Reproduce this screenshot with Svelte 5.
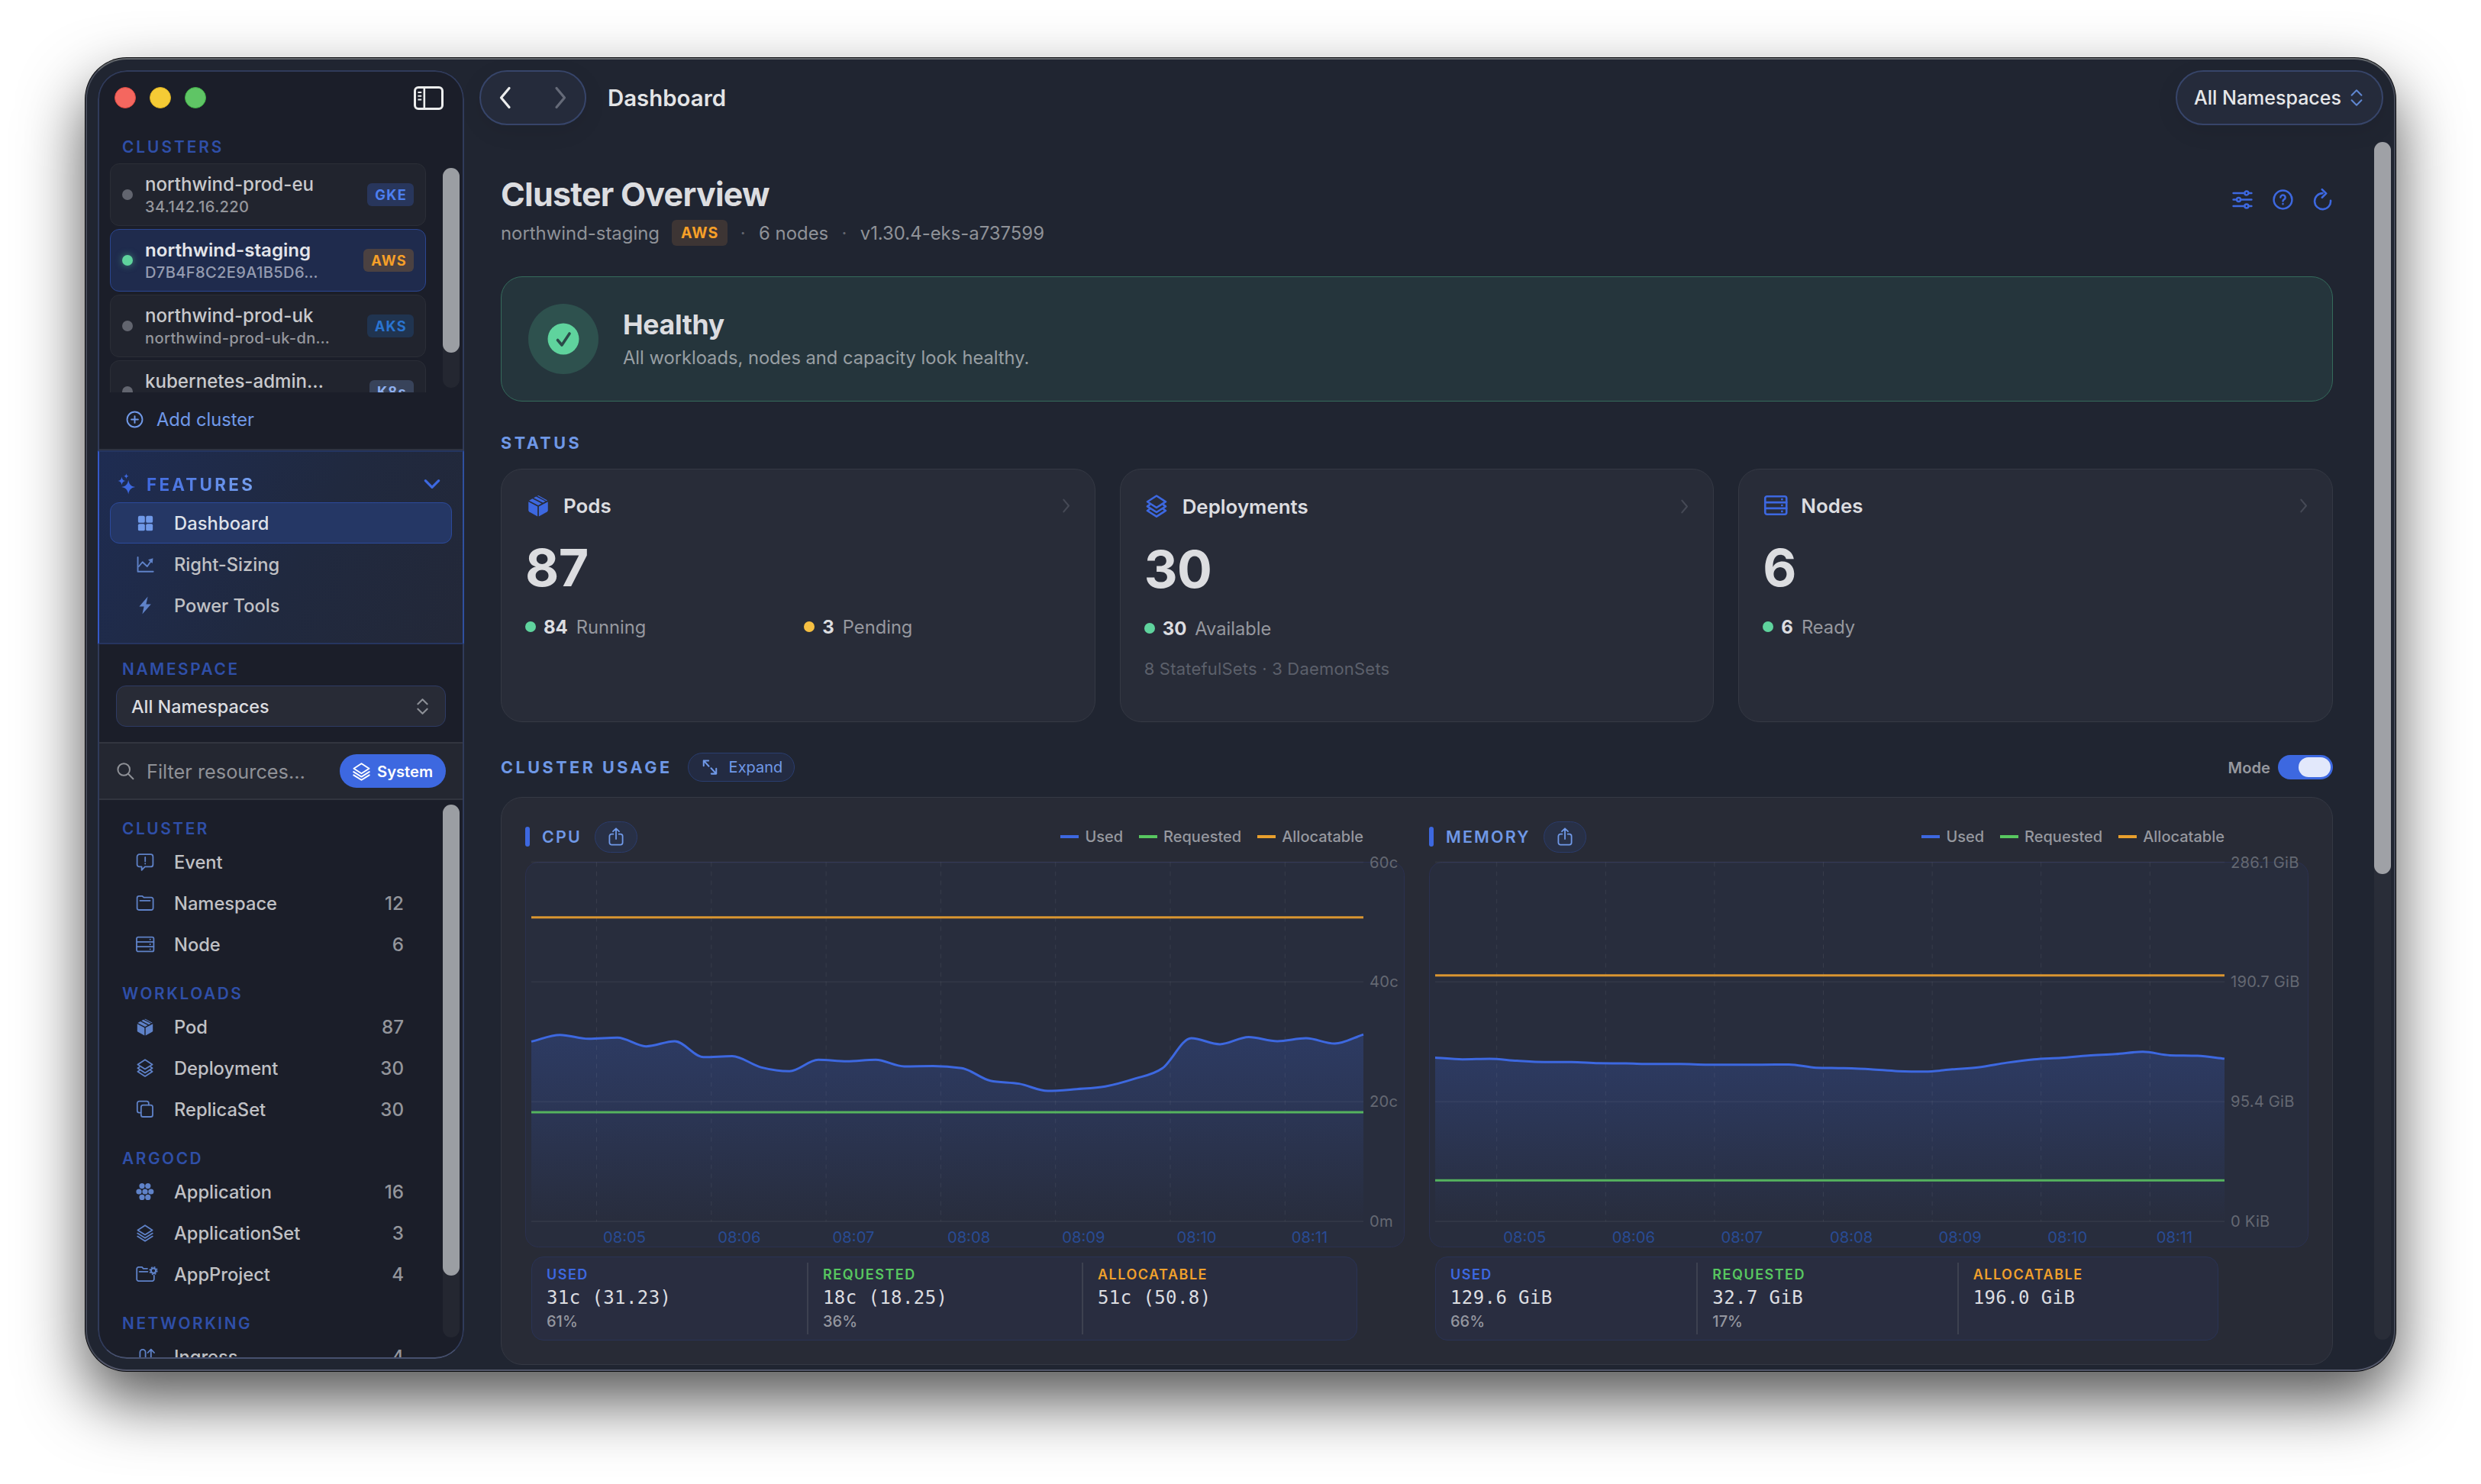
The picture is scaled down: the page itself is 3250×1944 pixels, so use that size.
<script>
    const icons = {
        layers: '<path d="M12 2.2 21.6 8.4 12 14.6 2.4 8.4Z"/><path d="M2.2 12.6 12 18.8l9.8-6.2M2.2 16.6 12 22.8l9.8-6.2"/>',
        stack: '<path d="M12 1.2 21.6 7.4 12 13.6 2.4 7.4Z"/><path d="M4.6 10.7 2.4 12.3 12 18.4l9.6-6.1-2.2-1.6M4.6 15.2 2.4 16.8 12 22.9l9.6-6.1-2.2-1.6"/>',
        event: '<path d="M4.6 2.2h14.8a3 3 0 0 1 3 3v10.2a3 3 0 0 1-3 3h-7.6L7.6 22.8v-4.4h-3a3 3 0 0 1-3-3V5.2a3 3 0 0 1 3-3Z"/><path d="M12.2 6v5.4M12.2 14.2v.4"/>',
        folder: '<path d="M1.6 18.6V5.2A2.4 2.4 0 0 1 4 2.8h4.2l2.2 1.8h9.8A2.4 2.4 0 0 1 22.6 7v11.6a2.4 2.4 0 0 1-2.4 2.4H4a2.4 2.4 0 0 1-2.4-2.4ZM5.4 8.8h13.2"/>',
        server: '<rect x="1" y="2.6" width="22.4" height="18.8" rx="2"/><path d="M1 8.9h22.4M1 15.1h22.4"/><path d="M18.6 5.7h.2M18.6 12h.2M18.6 18.3h.2"/>',
        copy: '<path d="M6.6 16.6H4.4A2.6 2.6 0 0 1 1.8 14V4.2a2.6 2.6 0 0 1 2.6-2.6h9.8a2.6 2.6 0 0 1 2.6 2.6v2.2"/><rect x="6.8" y="6.6" width="15.2" height="15.4" rx="2.6"/>',
        folderGear: '<path d="M15 4.8H9.8L8 2.9H3.6a2.4 2.4 0 0 0-2.4 2.4v13.4a2.4 2.4 0 0 0 2.4 2.4h17.8a2.4 2.4 0 0 0 2.4-2.4v-4.9M4.6 8.8h10.8"/><circle cx="23" cy="7.6" r="3.2" stroke-width="2.2"/><circle cx="23" cy="7.6" r="4.9" stroke-width="1.4" stroke-dasharray="2 1.85" stroke-linecap="butt"/>',
        ingress: '<path d="M5.4 14V6.4a3.6 3.6 0 0 1 7.2 0V18a3.6 3.6 0 0 0 7.2 0V3.4M15.6 7l4.2-4.4L24 7"/>',
        trend: '<path d="M1.6 2v19.6h21"/><path d="m3 14.6 5-6 6.4 6L20 6.8"/><path d="m15.6 5.4 6.8-2-.8 7Z" fill="currentColor" stroke="none"/>',
        chevron: '<path d="m4 8 8 8 8-8"/>',
        updown: '<path d="m5 8.4 7-7 7 7M5 15.6l7 7 7-7"/>',
        search: '<circle cx="10.2" cy="10" r="7.8"/><path d="m16 15.8 6.4 6.4"/>',
        plus: '<circle cx="12" cy="12" r="10.4"/><path d="M12 7.4v9.2M7.4 12h9.2"/>',
        expand: '<path d="M3 10V2.6h7M3 2.6l7.4 8M21 14v7.4h-7M21 21.4l-7.4-8"/>',
        share: '<path d="M8.4 8.6H6.2a2.8 2.8 0 0 0-2.8 2.8v8.4a2.8 2.8 0 0 0 2.8 2.8h11.6a2.8 2.8 0 0 0 2.8-2.8v-8.4a2.8 2.8 0 0 0-2.8-2.8h-2.2M12 15V1.6M8 5.2l4-3.9 4 3.9"/>',
        sliders: '<path d="M1.4 4.4h12.8M19.4 4.4h3.2M1.4 12H5M10.2 12h12.4M1.4 19.6h12.8M19.4 19.6h3.2"/><circle cx="16.8" cy="4.4" r="2.2"/><circle cx="7.6" cy="12" r="2.2"/><circle cx="16.8" cy="19.6" r="2.2"/>',
        help: '<circle cx="12" cy="12" r="10.6"/><path d="M9.2 9.4a2.8 2.7 0 1 1 4.3 2.3c-1 .6-1.5 1-1.5 2.1M12 16.8v.3"/>',
        refresh: '<path d="M11.6 4.4A9 9 0 1 0 20.6 12.6"/><path d="m11 .2 4.6 4.4L11 9.2"/>',
        left: '<path d="m16 2-8.4 10L16 22"/>',
        right: '<path d="m8 2 8.4 10L8 22"/>',
    };

    const solid = {
        cube: '<path d="M1.8 8.2 11.3 13.2V23.6L2.7 18.7a1.8 1.8 0 0 1-.9-1.5Z"/><path d="M22.2 8.2 12.7 13.2V23.6l8.6-4.9a1.8 1.8 0 0 0 .9-1.5Z"/><path d="m2.4 6.9 3.5-2 9.7 5-3.6 2Z"/><path d="m7.2 4.2 2.6-1.5 9.8 5-2.6 1.5Z"/><path d="M11 2l.2-.1a1.8 1.8 0 0 1 1.7 0l8.7 4.9-1 .5Z"/>',
        hive: '<circle cx="8" cy="4.6" r="3.6"/><circle cx="15.8" cy="4.6" r="3.6"/><circle cx="4" cy="12" r="3.6"/><circle cx="12" cy="12" r="3.6"/><circle cx="19.8" cy="12" r="3.6"/><circle cx="8" cy="19.4" r="3.6"/><circle cx="15.8" cy="19.4" r="3.6"/>',
        grid: '<rect x="1" y="0.8" width="10.2" height="10.4" rx="2.2"/><rect x="12.8" y="0.8" width="10.2" height="10.4" rx="2.2"/><rect x="1" y="12.8" width="10.2" height="10.4" rx="2.2"/><rect x="12.8" y="12.8" width="10.2" height="10.4" rx="2.2"/>',
        bolt: '<path d="M15.6.4 4.4 13.4h6.2L8.4 23.6 19.8 10.4h-6.4Z"/>',
        sparkles: '<path d="M14 7.2c1 5.200 2.900 7.600 8.400 8.600-5.500 1-7.400 3.400-8.400 8.600-1-5.200-2.900-7.600-8.400-8.600 5.500-1 7.400-3.400 8.400-8.600Z"/><path d="M6 3.200c.6 3.300 1.700 4.600 4.800 5.100C7.700 8.800 6.600 10.100 6 13.400 5.400 10.100 4.300 8.800 1.200 8.300 4.300 7.800 5.400 6.500 6 3.200Z"/><path d="M11.400-.8c.4 2.100 1.100 2.900 3.100 3.300-2 .4-2.700 1.200-3.100 3.300-.4-2.100-1.100-2.900-3.100-3.300 2-.4 2.700-1.200 3.100-3.300Z"/>',
    };

    const clusters = [
        { name: "northwind-prod-eu", host: "34.142.16.220", tag: "GKE" },
        { name: "northwind-staging", host: "D7B4F8C2E9A1B5D6…", tag: "AWS", active: true },
        { name: "northwind-prod-uk", host: "northwind-prod-uk-dn…", tag: "AKS" },
        { name: "kubernetes-admin…", host: "", tag: "K8s" },
    ];

    const features = [
        { name: "Dashboard", icon: "grid", size: 21, active: true },
        { name: "Right-Sizing", icon: "trend", size: 23 },
        { name: "Power Tools", icon: "bolt", size: 24 },
    ];

    const resources = [
        {
            title: "CLUSTER",
            items: [
                { name: "Event", icon: "event", count: "" },
                { name: "Namespace", icon: "folder", count: 12 },
                { name: "Node", icon: "server", count: 6 },
            ],
        },
        {
            title: "WORKLOADS",
            items: [
                { name: "Pod", icon: "cube", count: 87 },
                { name: "Deployment", icon: "stack", count: 30 },
                { name: "ReplicaSet", icon: "copy", count: 30 },
            ],
        },
        {
            title: "ARGOCD",
            items: [
                { name: "Application", icon: "hive", count: 16 },
                { name: "ApplicationSet", icon: "layers", count: 3 },
                { name: "AppProject", icon: "folderGear", count: 4 },
            ],
        },
        {
            title: "NETWORKING",
            items: [{ name: "Ingress", icon: "ingress", count: 4 }],
        },
    ];

    const cards = [
        {
            title: "Pods",
            icon: "cube",
            total: 87,
            states: [
                { n: 84, label: "Running", kind: "ok" },
                { n: 3, label: "Pending", kind: "warn" },
            ],
        },
        {
            title: "Deployments",
            icon: "stack",
            total: 30,
            states: [{ n: 30, label: "Available", kind: "ok" }],
            extra: "8 StatefulSets · 3 DaemonSets",
        },
        {
            title: "Nodes",
            icon: "server",
            total: 6,
            states: [{ n: 6, label: "Ready", kind: "ok" }],
        },
    ];

    const times = ["08:05", "08:06", "08:07", "08:08", "08:09", "08:10", "08:11"];

    const charts = [
        {
            title: "CPU",
            max: 60,
            right: 1098,
            tickStart: 93.5,
            tickStep: 150.3,
            labels: ["60c", "40c", "20c", "0m"],
            allocatable: 50.8,
            requested: 18.25,
            used: [
                30.05, 31.15, 30.5, 30.7, 29.25, 30.1, 27.45, 27.6, 25.75, 25.1,
                27.0, 26.75, 27.0, 25.9, 25.95, 25.6, 23.5, 23.0, 21.8, 22.1,
                22.55, 23.8, 25.6, 30.6, 29.6, 30.8, 30.1, 30.6, 29.7, 31.23,
            ],
            stats: [
                { label: "USED", value: "31c (31.23)", pct: "61%" },
                { label: "REQUESTED", value: "18c (18.25)", pct: "36%" },
                { label: "ALLOCATABLE", value: "51c (50.8)", pct: "" },
            ],
        },
        {
            title: "MEMORY",
            max: 286.1,
            right: 1042,
            tickStart: 88.7,
            tickStep: 142.6,
            labels: ["286.1 GiB", "190.7 GiB", "95.4 GiB", "0 KiB"],
            allocatable: 196,
            requested: 32.7,
            used: [
                130.5, 129.1, 129.5, 128.0, 127.0, 127.0, 126.0, 125.8, 125.4, 125.4,
                124.8, 124.8, 124.8, 125.0, 122.4, 122.0, 121.2, 119.7, 119.3, 121.1,
                122.8, 126.4, 129.1, 130.3, 132.1, 133.3, 135.1, 132.3, 131.9, 129.6,
            ],
            stats: [
                { label: "USED", value: "129.6 GiB", pct: "66%" },
                { label: "REQUESTED", value: "32.7 GiB", pct: "17%" },
                { label: "ALLOCATABLE", value: "196.0 GiB", pct: "" },
            ],
        },
    ];

    const LEFT = 8;
    const TOP = 1.5;
    const BOTTOM = 472;

    function yOf(value, max) {
        return BOTTOM - (value / max) * (BOTTOM - TOP);
    }

    // monotone cubic, so the curve never overshoots a sample
    function linePath(chart) {
        const step = (chart.right - LEFT) / (chart.used.length - 1);
        const ys = chart.used.map((v) => yOf(v, chart.max));
        const slopes = ys.slice(1).map((y, i) => (y - ys[i]) / step);
        const tangents = ys.map((_, i) => {
            if (i === 0) return slopes[0];
            if (i === ys.length - 1) return slopes[i - 1];
            const a = slopes[i - 1];
            const b = slopes[i];
            if (a * b <= 0) return 0;
            return Math.sign(a) * Math.min(Math.abs(a), Math.abs(b), Math.abs(a + b) / 4) * 2;
        });
        let d = `M${LEFT} ${ys[0].toFixed(2)}`;
        for (let i = 1; i < ys.length; i++) {
            const x0 = LEFT + step * (i - 1);
            const x1 = LEFT + step * i;
            const c0 = ys[i - 1] + (tangents[i - 1] * step) / 3;
            const c1 = ys[i] - (tangents[i] * step) / 3;
            d += `C${(x0 + step / 3).toFixed(2)} ${c0.toFixed(2)} ${(x1 - step / 3).toFixed(2)} ${c1.toFixed(2)} ${x1.toFixed(2)} ${ys[i].toFixed(2)}`;
        }
        return d;
    }
</script>

{#snippet icon(name, size, weight = 1.8)}
    {#if solid[name]}
        <svg class="icon" width={size} height={size} viewBox="0 0 24 24" fill="currentColor">{@html solid[name]}</svg>
    {:else}
        <svg
            class="icon"
            width={size}
            height={size}
            viewBox="0 0 24 24"
            fill="none"
            stroke="currentColor"
            stroke-width={weight}
            stroke-linecap="round"
            stroke-linejoin="round">{@html icons[name]}</svg
        >
    {/if}
{/snippet}

<div class="desktop">
    <div class="window">
        <aside class="sidebar">
            <div class="titlebar">
                <span class="light red"></span>
                <span class="light yellow"></span>
                <span class="light green"></span>
                <svg class="panel-toggle" width="39" height="31" viewBox="0 0 39 31" fill="none" stroke="currentColor">
                    <rect x="1.5" y="1.5" width="36" height="28" rx="4.5" stroke-width="3" />
                    <path d="M13.8 2v27" stroke-width="2.6" />
                    <path d="M5.4 8h4.8M5.4 12.8h4.8M5.4 17.6h4.8" stroke-width="2" />
                </svg>
            </div>

            <div class="label clusters-label">CLUSTERS</div>
            <div class="cluster-area">
                <div class="cluster-list">
                    {#each clusters as c}
                        <div class="cluster" class:active={c.active}>
                            <span class="dot"></span>
                            <div class="cluster-text">
                                <div class="cluster-name">{c.name}</div>
                                <div class="cluster-host">{c.host}</div>
                            </div>
                            <span class="tag {c.tag.toLowerCase()}">{c.tag}</span>
                        </div>
                    {/each}
                </div>
                <div class="scrollbar"><div class="thumb clusters-thumb"></div></div>
            </div>
            <div class="add-cluster">
                {@render icon("plus", 23, 2)}
                <span>Add cluster</span>
            </div>

            <div class="features">
                <div class="features-head">
                    {@render icon("sparkles", 26)}
                    <span class="features-title">FEATURES</span>
                    {@render icon("chevron", 26, 3)}
                </div>
                {#each features as f}
                    <div class="item feature" class:active={f.active}>
                        <span class="item-icon">{@render icon(f.icon, f.size, 2)}</span>
                        <span>{f.name}</span>
                    </div>
                {/each}
            </div>

            <div class="namespace">
                <div class="label">NAMESPACE</div>
                <div class="select">
                    <span>All Namespaces</span>
                    {@render icon("updown", 21, 2.4)}
                </div>
            </div>

            <div class="filter">
                {@render icon("search", 24, 2)}
                <span class="placeholder">Filter resources…</span>
                <span class="system">{@render icon("layers", 25, 1.9)} System</span>
            </div>

            <div class="resource-area">
                <div class="resource-list">
                    {#each resources as group}
                        <div class="label group-label">{group.title}</div>
                        {#each group.items as item}
                            <div class="item">
                                <span class="item-icon">{@render icon(item.icon, 24, 1.8)}</span>
                                <span>{item.name}</span>
                                <span class="count">{item.count}</span>
                            </div>
                        {/each}
                    {/each}
                </div>
                <div class="scrollbar"><div class="thumb resources-thumb"></div></div>
            </div>
        </aside>

        <main class="main">
            <div class="toolbar">
                <div class="pill nav">
                    {@render icon("left", 30, 2.6)}
                    <span class="dim">{@render icon("right", 30, 2.6)}</span>
                </div>
                <div class="toolbar-title">Dashboard</div>
                <div class="pill ns">
                    <span>All Namespaces</span>
                    {@render icon("updown", 22, 2.2)}
                </div>
            </div>

            <div class="body">
                <div class="page">
                    <div class="page-head">
                        <div>
                            <h1>Cluster Overview</h1>
                            <div class="meta">
                                <span>northwind-staging</span>
                                <span class="tag aws big">AWS</span>
                                <span class="sep">·</span>
                                <span>6 nodes</span>
                                <span class="sep">·</span>
                                <span>v1.30.4-eks-a737599</span>
                            </div>
                        </div>
                        <div class="actions">
                            {@render icon("sliders", 27, 2.2)}
                            {@render icon("help", 27, 2.2)}
                            {@render icon("refresh", 28, 2.2)}
                        </div>
                    </div>

                    <div class="health">
                        <div class="health-icon">
                            <svg width="42" height="42" viewBox="0 0 42 42">
                                <circle cx="21" cy="21" r="20.5" fill="#5fd39d" />
                                <path
                                    d="m13.5 22.5 5.5 6.5L29 14"
                                    fill="none"
                                    stroke="#2b4a49"
                                    stroke-width="3.6"
                                    stroke-linecap="round"
                                    stroke-linejoin="round"
                                />
                            </svg>
                        </div>
                        <div class="health-body">
                            <div class="health-title">Healthy</div>
                            <div class="health-text">All workloads, nodes and capacity look healthy.</div>
                        </div>
                    </div>

                    <div class="section-title status-title">STATUS</div>
                    <div class="cards">
                        {#each cards as card}
                            <div class="card">
                                <div class="card-head" class:tall={card.extra}>
                                    <span class="card-icon">{@render icon(card.icon, 30, 2.1)}</span>
                                    <span class="card-title">{card.title}</span>
                                    <span class="card-arrow">{@render icon("right", 19, 2.6)}</span>
                                </div>
                                <div class="total">{card.total}</div>
                                <div class="states">
                                    {#each card.states as s}
                                        <div class="state">
                                            <span class="dot {s.kind}"></span>
                                            <b>{s.n}</b>
                                            <span>{s.label}</span>
                                        </div>
                                    {/each}
                                </div>
                                {#if card.extra}
                                    <div class="extra">{card.extra}</div>
                                {/if}
                            </div>
                        {/each}
                    </div>

                    <div class="usage-head">
                        <span class="section-title">CLUSTER USAGE</span>
                        <span class="expand">{@render icon("expand", 22, 2.2)} Expand</span>
                        <span class="mode">Mode</span>
                        <span class="toggle"><span class="knob"></span></span>
                    </div>

                    <div class="usage">
                        {#each charts as chart}
                            <div class="chart">
                                <div class="chart-head" style="padding-right: {1152 - chart.right}px">
                                    <span class="bar"></span>
                                    <span class="chart-title">{chart.title}</span>
                                    <span class="share">{@render icon("share", 24, 1.8)}</span>
                                    <div class="legend">
                                        <span class="key used">Used</span>
                                        <span class="key requested">Requested</span>
                                        <span class="key allocatable">Allocatable</span>
                                    </div>
                                </div>
                                <svg class="plot" width="1152" height="506" viewBox="0 0 1152 506">
                                    <defs>
                                        <linearGradient id="fill-{chart.title}" x1="0" y1="0" x2="0" y2="1">
                                            <stop offset="0" stop-color="#3d68e0" stop-opacity="0.23" />
                                            <stop offset="0.4" stop-color="#3d68e0" stop-opacity="0.15" />
                                            <stop offset="1" stop-color="#3d68e0" stop-opacity="0" />
                                        </linearGradient>
                                    </defs>
                                    <rect class="plot-bg" x="0.5" y="1.5" width="1151" height="504" rx="17" />
                                    <path
                                        d="{linePath(chart)}V{BOTTOM}H{LEFT}Z"
                                        fill="url(#fill-{chart.title})"
                                    />
                                    {#each chart.labels as label, i}
                                        {@const y = TOP + ((BOTTOM - TOP) / 3) * i}
                                        <line class="grid" x1={LEFT} x2={chart.right} y1={y} y2={y} />
                                        <text class="y-label" x={chart.right + 8} y={y + 7}>{label}</text>
                                    {/each}
                                    {#each times as time, i}
                                        {@const x = chart.tickStart + chart.tickStep * i}
                                        <line class="tick" x1={x} x2={x} y1={TOP} y2={BOTTOM} />
                                        <text class="x-label" x={x + 8.5} y="500">{time}</text>
                                    {/each}
                                    <line
                                        class="limit orange"
                                        x1={LEFT}
                                        x2={chart.right}
                                        y1={yOf(chart.allocatable, chart.max)}
                                        y2={yOf(chart.allocatable, chart.max)}
                                    />
                                    <path class="used-line" d={linePath(chart)} />
                                    <line
                                        class="limit lime"
                                        x1={LEFT}
                                        x2={chart.right}
                                        y1={yOf(chart.requested, chart.max)}
                                        y2={yOf(chart.requested, chart.max)}
                                    />
                                </svg>
                                <div class="stats" style="width: {chart.right - 16}px">
                                    {#each chart.stats as s}
                                        <div class="stat">
                                            <div class="stat-label {s.label.toLowerCase()}">{s.label}</div>
                                            <div class="stat-value">{s.value}</div>
                                            <div class="stat-pct">{s.pct}</div>
                                        </div>
                                    {/each}
                                </div>
                            </div>
                        {/each}
                    </div>
                </div>
                <div class="scrollbar main-scroll"><div class="thumb main-thumb"></div></div>
            </div>
        </main>
    </div>
</div>

<style>
    :global(body) {
        background: #fff;
    }

    .desktop,
    .desktop * {
        box-sizing: border-box;
    }

    .desktop {
        width: 3250px;
        height: 1944px;
        padding: 76px 112px;
        overflow: hidden;
        font-family: Inter, "Liberation Sans", sans-serif;
        font-size: 23.4px;
        color: #dcdde0;
        white-space: nowrap;
    }

    .window {
        display: flex;
        width: 3026px;
        height: 1720px;
        border: 2px solid;
        border-color: #62666b #444957 #53576a #444957;
        border-radius: 54px;
        background: #202531;
        overflow: hidden;
        box-shadow:
            0 0 0 1px #08090c,
            0 38px 84px rgba(0, 0, 0, 0.68);
    }

    .icon {
        display: block;
        flex: none;
        overflow: visible;
    }

    /* sidebar */

    .sidebar {
        position: relative;
        display: flex;
        flex-direction: column;
        flex: none;
        width: 480px;
        height: 1688px;
        margin: 14px 0 14px 14px;
        border-radius: 38px;
        background: #1b1e29;
        overflow: hidden;
    }

    .sidebar::after {
        content: "";
        position: absolute;
        inset: 0;
        border: 2px solid #303b5a;
        border-bottom-color: #46506e;
        border-radius: 38px;
        pointer-events: none;
    }

    .titlebar {
        display: flex;
        align-items: center;
        flex: none;
        gap: 18px;
        height: 72px;
        padding: 0 27px 0 22px;
    }

    .light {
        width: 28px;
        height: 28px;
        border-radius: 50%;
    }

    .red {
        background: #f4675f;
        border: 1px solid #dc4a42;
    }

    .yellow {
        background: #f5cb35;
        border: 1px solid #dbb021;
    }

    .green {
        background: #5fc565;
        border: 1px solid #3fae46;
    }

    .panel-toggle {
        margin-left: auto;
        color: #eceded;
    }

    .label {
        font-size: 20.8px;
        font-weight: 600;
        line-height: 28px;
        letter-spacing: 2.6px;
        color: #2f4fa8;
        padding-left: 32px;
    }

    .clusters-label {
        flex: none;
        padding-top: 15px;
        padding-bottom: 7px;
        letter-spacing: 3px;
    }

    .cluster-area {
        display: flex;
        flex: none;
        justify-content: space-between;
        height: 300px;
        padding: 0 6px 0 16px;
        overflow: hidden;
    }

    .cluster-list {
        display: flex;
        flex-direction: column;
        gap: 4px;
        width: 414px;
    }

    .cluster {
        display: flex;
        align-items: center;
        flex: none;
        height: 82px;
        padding: 0 15px;
        border: 1px solid #2b2e37;
        border-radius: 12px;
        background: #21242e;
    }

    .cluster.active {
        background: #1f2b4d;
        border-color: #2b4690;
    }

    .dot {
        flex: none;
        width: 14px;
        height: 14px;
        border-radius: 50%;
        background: #62656f;
    }

    .cluster.active .dot {
        background: #5fd39d;
        box-shadow: 0 0 10px rgba(95, 211, 157, 0.55);
    }

    .cluster-text {
        flex: 1;
        padding: 2px 0 0 16px;
    }

    .cluster-name {
        font-size: 24.1px;
        font-weight: 500;
        line-height: 30px;
        color: #c8c9cc;
    }

    .active .cluster-name {
        font-weight: 600;
        color: #e3e5ea;
    }

    .cluster-host {
        height: 28px;
        font-size: 20.1px;
        font-weight: 500;
        line-height: 28px;
        letter-spacing: 0.35px;
        color: #94969c;
    }

    .active .cluster-host {
        color: #949bb0;
    }

    .tag {
        height: 30px;
        padding: 0 9px 0 10px;
        border-radius: 6px;
        font-size: 18.2px;
        font-weight: 700;
        line-height: 31px;
        letter-spacing: 1.3px;
    }

    .gke {
        color: #4d7ff0;
        background: #28365c;
    }

    .aws {
        color: #f7a028;
        background: #4b4141;
    }

    .aks {
        color: #2a74d0;
        background: #203450;
    }

    .k8s {
        color: #8fb0ee;
        background: #38435a;
    }

    .scrollbar {
        flex: none;
        width: 22px;
        margin: 6px 0;
        border-radius: 11px;
        background: #242731;
    }

    .thumb {
        border-radius: 11px;
        background: #9b9ea3;
    }

    .clusters-thumb {
        height: 242px;
    }

    .resources-thumb {
        height: 617px;
    }

    .add-cluster {
        display: flex;
        align-items: center;
        flex: none;
        gap: 17px;
        height: 76px;
        padding: 0 0 4px 37px;
        border-bottom: 2px solid #2e3340;
        font-size: 23.7px;
        color: #7099e8;
    }

    .features {
        position: relative;
        z-index: 1;
        flex: none;
        height: 254px;
        padding: 18px 14px 0;
        border: 2px solid;
        border-color: #243560 #2f509f #263560 #3559c8;
        background: linear-gradient(120deg, #1e2c52, #20293f 55%, #232838);
    }

    .features-head {
        display: flex;
        align-items: center;
        height: 48px;
        padding: 0 13px 0 9px;
        color: #3d68e0;
    }

    .features-title {
        flex: 1;
        margin-left: 13px;
        font-size: 22.4px;
        font-weight: 700;
        letter-spacing: 3.3px;
        background: linear-gradient(90deg, #3f69e0, #76a0ee 140px);
        background-clip: text;
        color: transparent;
    }

    .item {
        display: flex;
        align-items: center;
        height: 54px;
        font-size: 23.7px;
        font-weight: 500;
        color: #c0c1c5;
    }

    .item-icon {
        display: flex;
        justify-content: center;
        width: 28px;
        margin-right: 24px;
        color: #5f82c8;
    }

    .feature {
        padding-left: 31px;
        border: 1px solid transparent;
        border-radius: 12px;
    }

    .feature.active {
        background: #253765;
        border-color: #2c4a9c;
        color: #dfe2ea;
        letter-spacing: 0.1px;
    }

    .feature.active .item-icon {
        color: #7099e8;
    }

    .namespace {
        flex: none;
        height: 128px;
        padding-top: 19px;
    }

    .select {
        display: flex;
        align-items: center;
        justify-content: space-between;
        height: 54px;
        margin: 7px 24px 0;
        padding: 0 19px;
        border: 1px solid #2e3b64;
        border-radius: 13px;
        background: #282b36;
        font-weight: 500;
        color: #dcdde0;
    }

    .select .icon {
        color: #8d9097;
    }

    .filter {
        display: flex;
        align-items: center;
        flex: none;
        height: 76px;
        padding: 0 24px;
        border-top: 2px solid #32353f;
        border-bottom: 2px solid #32353f;
        background: #242731;
        color: #8f9197;
    }

    .placeholder {
        flex: 1;
        margin-left: 16px;
        font-size: 25.3px;
    }

    .system {
        display: flex;
        align-items: center;
        gap: 8px;
        width: 139px;
        height: 44px;
        padding-left: 16px;
        border-radius: 22px;
        background: #3d68e0;
        font-size: 20.2px;
        font-weight: 600;
        color: #fff;
    }

    .resource-area {
        display: flex;
        justify-content: space-between;
        flex: 1;
        min-height: 0;
        padding-right: 6px;
    }

    .resource-list {
        width: 401px;
        height: 100%;
        overflow: hidden;
    }

    .resource-area .scrollbar {
        margin-bottom: 28px;
    }

    .group-label {
        height: 54px;
        padding-top: 24px;
    }

    .resource-list .item {
        padding-left: 48px;
    }

    .count {
        margin-left: auto;
        font-size: 24.2px;
        color: #94969c;
    }

    /* main */

    .main {
        display: flex;
        flex-direction: column;
        flex: 1;
        min-width: 0;
    }

    .toolbar {
        display: flex;
        align-items: center;
        flex: none;
        height: 86px;
        padding: 14px 14px 0 20px;
    }

    .pill {
        display: flex;
        align-items: center;
        height: 72px;
        border: 2px solid #37456a;
        border-radius: 36px;
        background: #252b3b;
        box-shadow: 0 8px 30px rgba(0, 0, 0, 0.08);
    }

    .nav {
        justify-content: space-between;
        width: 140px;
        padding: 0 17px;
        color: #eceded;
    }

    .dim {
        color: #656a78;
    }

    .toolbar-title {
        margin-left: 28px;
        font-size: 29.4px;
        font-weight: 600;
        color: #e3e4e6;
    }

    .ns {
        justify-content: space-between;
        width: 272px;
        margin-left: auto;
        padding: 0 22px;
        font-size: 25px;
        font-weight: 500;
        color: #e6e7e9;
    }

    .ns .icon {
        color: #5f86d0;
    }

    .body {
        display: flex;
        flex: 1;
        min-height: 0;
    }

    .page {
        flex: 1;
        padding: 64px 54px 0 48px;
    }

    .main-scroll {
        height: 1569px;
        margin: 22px 4px 0 0;
        background: #292d38;
    }

    .main-thumb {
        height: 959px;
        background: #9fa1a6;
    }

    .page-head {
        display: flex;
        justify-content: space-between;
        height: 94px;
    }

    h1 {
        margin: 0 0 8px;
        font-size: 43px;
        font-weight: 700;
        line-height: 52px;
        letter-spacing: -0.75px;
    }

    .meta {
        display: flex;
        align-items: center;
        height: 34px;
        font-size: 23.9px;
        color: #8f9298;
    }

    .big {
        height: 34px;
        margin: 0 0 0 16px;
        padding: 0 11px 0 12px;
        font-size: 19.6px;
        line-height: 35px;
        letter-spacing: 1.1px;
        background: #3d3534;
    }

    .sep {
        width: 41.5px;
        text-align: center;
        color: #63666f;
    }

    .actions {
        display: flex;
        gap: 25.5px;
        margin-right: -1px;
        padding-top: 20px;
        color: #3d68e0;
    }

    .health {
        display: flex;
        align-items: center;
        gap: 32px;
        height: 164px;
        margin-top: 40px;
        padding-left: 35px;
        border: 1px solid #356b5c;
        border-radius: 28px;
        background: #25353c;
    }

    .health-icon {
        display: flex;
        align-items: center;
        justify-content: center;
        width: 92px;
        height: 92px;
        border-radius: 50%;
        background: #2e514e;
    }

    .health-body {
        padding-top: 5px;
    }

    .health-title {
        font-size: 35.6px;
        font-weight: 700;
        line-height: 44px;
        letter-spacing: -0.3px;
    }

    .health-text {
        font-size: 23.7px;
        line-height: 41px;
        color: #989fa3;
    }

    .section-title {
        font-size: 21.6px;
        font-weight: 700;
        line-height: 28px;
        letter-spacing: 3.5px;
        color: #6f98e6;
    }

    .status-title {
        margin: 40px 0 20px;
    }

    .cards {
        display: grid;
        grid-template-columns: repeat(3, 1fr);
        gap: 32px;
    }

    .card {
        height: 332px;
        padding: 31px;
        border: 1px solid #353944;
        border-radius: 28px;
        background: #282c38;
    }

    .card-head {
        display: flex;
        align-items: center;
        height: 32px;
    }

    .card-head.tall {
        height: 34px;
    }

    .card-icon {
        display: flex;
        justify-content: center;
        width: 33px;
        margin-right: 17px;
        color: #3d68e0;
    }

    .card-title {
        font-size: 25.9px;
        font-weight: 600;
        color: #dcdde0;
    }

    .card-arrow {
        margin: 0 -3px 0 auto;
        color: #454955;
    }

    .total {
        margin: 25px 0 23px;
        font-size: 68px;
        font-weight: 700;
        line-height: 80px;
        letter-spacing: -0.6px;
        color: #dcdde0;
    }

    .states {
        display: grid;
        grid-template-columns: 1fr 1fr;
        gap: 16px;
    }

    .state {
        display: flex;
        align-items: center;
        height: 30px;
        font-size: 23.7px;
        color: #96989f;
    }

    .state b {
        margin: 0 11px 0 10px;
        font-size: 24px;
        font-weight: 700;
        color: #dcdde0;
    }

    .ok {
        background: #5fd39d;
    }

    .warn {
        background: #f5bf42;
    }

    .extra {
        margin-top: 24px;
        font-size: 22px;
        line-height: 28px;
        letter-spacing: 0.2px;
        color: #5c606b;
    }

    .usage-head {
        display: flex;
        align-items: center;
        height: 38px;
        margin: 40px 0 20px;
    }

    .expand {
        display: flex;
        align-items: center;
        gap: 14px;
        width: 140px;
        height: 38px;
        margin-left: 20px;
        padding-left: 17px;
        border: 1px solid #2a3e70;
        border-radius: 19px;
        background: #232b42;
        font-size: 20px;
        color: #7099e8;
    }

    .mode {
        margin-left: auto;
        font-size: 20.2px;
        font-weight: 600;
        color: #96989f;
    }

    .toggle {
        display: flex;
        justify-content: flex-end;
        width: 72px;
        height: 32px;
        margin-left: 10px;
        padding: 3px;
        border-radius: 16px;
        background: #3d68e0;
    }

    .knob {
        width: 42px;
        height: 26px;
        border-radius: 13px;
        background: #e2e8fb;
    }

    .usage {
        display: flex;
        gap: 32px;
        height: 744px;
        padding: 31px;
        border: 1px solid #353944;
        border-radius: 28px;
        background: #282b36;
    }

    .chart {
        width: 1152px;
    }

    .chart-head {
        display: flex;
        align-items: center;
        height: 40px;
        margin-bottom: 12px;
    }

    .bar {
        width: 6px;
        height: 26px;
        border-radius: 3px;
        background: #3d68e0;
    }

    .chart-title {
        margin: 0 17px 0 16px;
        font-size: 21.4px;
        font-weight: 600;
        letter-spacing: 2.2px;
        color: #6f98e6;
    }

    .share {
        display: flex;
        align-items: center;
        justify-content: center;
        width: 56px;
        height: 41px;
        border: 1px solid #2b3c6c;
        border-radius: 21px;
        background: #283046;
        color: #7099e8;
    }

    .legend {
        display: flex;
        gap: 21px;
        margin-left: auto;
        font-size: 20px;
        font-weight: 500;
        color: #96989f;
    }

    .key {
        display: flex;
        align-items: center;
        gap: 8px;
    }

    .key::before {
        content: "";
        width: 24px;
        height: 4px;
        background: currentColor;
    }

    .key.used::before {
        background: #3d68e0;
    }

    .key.requested::before {
        background: #58c760;
    }

    .key.allocatable::before {
        background: #e89f2d;
    }

    .plot {
        display: block;
        overflow: visible;
        font-size: 20.2px;
    }

    .plot-bg {
        fill: #282d3d;
        stroke: #2b3150;
        stroke-width: 1;
    }

    .grid {
        stroke: rgba(255, 255, 255, 0.045);
        stroke-width: 2;
    }

    .tick {
        stroke: rgba(255, 255, 255, 0.075);
        stroke-width: 1;
        stroke-dasharray: 6 6;
    }

    .y-label {
        fill: #646872;
        letter-spacing: 0.2px;
    }

    .x-label {
        fill: #294b93;
    }

    .used-line {
        fill: none;
        stroke: #3d68e0;
        stroke-width: 3;
    }

    .limit {
        stroke-width: 3;
    }

    .orange {
        stroke: #d99531;
    }

    .lime {
        stroke: #55b35e;
    }

    .stats {
        display: grid;
        grid-template-columns: repeat(3, 1fr);
        height: 110px;
        margin: 12px 0 0 8px;
        padding: 7px 0;
        border: 1px solid #2a3355;
        border-radius: 16px;
        background: #292d40;
    }

    .stat {
        padding: 6px 0 0 19px;
    }

    .stat + .stat {
        border-left: 2px solid #3d4150;
    }

    .stat-label {
        font-size: 18px;
        font-weight: 600;
        line-height: 20px;
        letter-spacing: 1.5px;
    }

    .stat-label.used {
        color: #3d68e0;
    }

    .stat-label.requested {
        color: #58c760;
    }

    .stat-label.allocatable {
        color: #f0a02c;
    }

    .stat-value {
        margin-top: 3px;
        font-family: "DejaVu Sans Mono", "Liberation Mono", monospace;
        font-size: 24px;
        line-height: 34px;
        letter-spacing: 0.4px;
        color: #dcdde0;
    }

    .stat-pct {
        font-size: 20px;
        font-weight: 500;
        line-height: 28px;
        color: #94969f;
    }
</style>
